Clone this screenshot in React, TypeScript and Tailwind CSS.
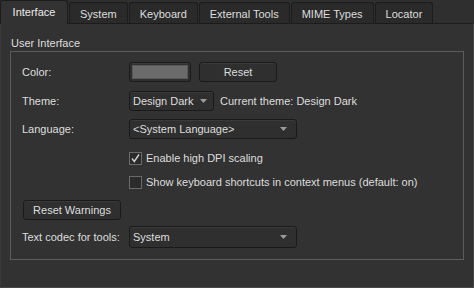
import type { ReactNode } from 'react';

// Preferences > Interface page, dark "Design Dark" theme.

const tabs = ['Interface', 'System', 'Keyboard', 'External Tools', 'MIME Types', 'Locator'];

export default function App() {
  return (
    <div
      className="h-[288px] w-[474px] overflow-hidden bg-[#2f2f2f] text-[11px] leading-[14px] text-[#dedede]"
      style={{ fontFamily: '"Liberation Sans", Arial, sans-serif' }}
    >
      {/* Tab bar */}
      <div className="flex h-[23px] items-end gap-px">
        {tabs.map((t, i) =>
          i === 0 ? (
            <div
              key={t}
              className="relative z-10 -mb-px flex h-[24px] w-[68px] items-center justify-center rounded-t-[3px] border border-b-0 border-[#1c1c1c] bg-[#323232] pb-[2px] text-[#ececec]"
            >
              {t}
            </div>
          ) : (
            <div
              key={t}
              className="flex h-[21px] items-center justify-center rounded-t-[3px] border border-b-0 border-[#1c1c1c] bg-[#2a2a2a] px-[10px] pt-[1px]"
            >
              {t}
            </div>
          ),
        )}
      </div>

      {/* Page */}
      <div className="h-[265px] w-[474px] border-t border-r border-b border-l border-t-[#1c1c1c] border-r-[#474747] border-b-[#474747] border-l-[#3a3a3a] bg-[#323232] pr-[9px] pl-[9px]">
        <div className="mt-[12px] pl-px">User Interface</div>
        <div className="mt-px h-[209px] border border-[#5c5c5c] pt-[10px] pl-[11px]">
          <Row>
            <Label>Color:</Label>
            <Button className="w-[62px]">
              <span className="block h-[14px] w-[56px] border border-[#585858] bg-[#6b6b6b]" />
            </Button>
            <Button className="ml-[8px] w-[78px]">Reset</Button>
          </Row>
          <Row className="mt-[9px]">
            <Label>Theme:</Label>
            <Combo className="w-[85px] pr-[6px]">Design Dark</Combo>
            <span className="ml-[6px]">Current theme: Design Dark</span>
          </Row>
          <Row className="mt-[8px]">
            <Label>Language:</Label>
            <Combo className="w-[168px] pr-[9px]">&lt;System Language&gt;</Combo>
          </Row>
          <Row className="mt-[9px]">
            <span className="w-[107px]" />
            <Check checked>Enable high DPI scaling</Check>
          </Row>
          <Row className="mt-[4px]">
            <span className="w-[107px]" />
            <Check>Show keyboard shortcuts in context menus (default: on)</Check>
          </Row>
          <div className="mt-[8px] flex h-[18px]">
            <Button className="ml-px h-[18px] w-[98px]">Reset Warnings</Button>
          </div>
          <div className="mt-[8px] flex h-[22px] items-center">
            <Label>Text codec for tools:</Label>
            <Combo className="h-[22px] w-[168px] pr-[9px]">System</Combo>
          </div>
        </div>
      </div>
    </div>
  );
}

function Row({ children, className = '' }: { children: ReactNode; className?: string }) {
  return <div className={`flex h-[20px] items-center ${className}`}>{children}</div>;
}
function Label({ children }: { children: ReactNode }) {
  return <span className="w-[107px] shrink-0">{children}</span>;
}
function Button({ children, className = '' }: { children: ReactNode; className?: string }) {
  return (
    <div
      className={`flex h-[20px] items-center justify-center rounded-[3px] border border-[#1a1a1a] bg-[#2f2f2f] shadow-[inset_0_1px_0_#3a3a3a] ${className}`}
    >
      {children}
    </div>
  );
}
function Combo({ children, className = '' }: { children: ReactNode; className?: string }) {
  return (
    <div
      className={`flex h-[20px] items-center justify-between gap-[4px] rounded-[3px] border border-[#1a1a1a] bg-[#2f2f2f] pl-[3px] shadow-[inset_0_1px_0_#3a3a3a] ${className}`}
    >
      <span className="whitespace-nowrap">{children}</span>
      <svg width="7" height="4" viewBox="0 0 7 4" className="shrink-0">
        <path d="M0 0H7L3.5 4Z" fill="#9a9a9a" />
      </svg>
    </div>
  );
}
function Check({ children, checked = false }: { children: ReactNode; checked?: boolean }) {
  return (
    <div className="flex items-center">
      <span className="flex h-[13px] w-[13px] items-center justify-center border border-[#6a6a6a] bg-[#2b2b2b]">
        {checked && (
          <svg width="11" height="11" viewBox="0 0 11 11">
            <path d="M2 5.5L4.3 8.5L9 1.5" stroke="#cfcfcf" strokeWidth="1.4" fill="none" />
          </svg>
        )}
      </span>
      <span className="ml-[4px]">{children}</span>
    </div>
  );
}
